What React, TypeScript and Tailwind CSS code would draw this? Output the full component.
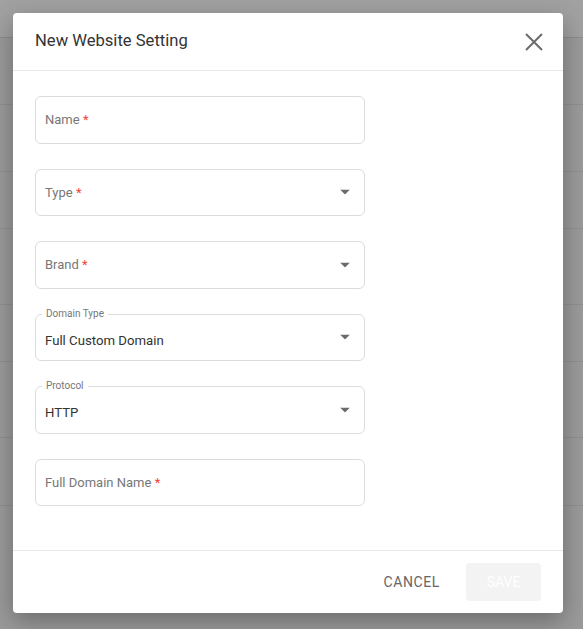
import React from "react";

const font = { fontFamily: "Roboto, 'Liberation Sans', Arial, sans-serif" };

function Arrow() {
  return (
    <svg width="10" height="5" viewBox="0 0 10 5" className="absolute right-[14px] top-1/2 -translate-y-1/2">
      <path d="M0 0 L10 0 L5 5 Z" fill="#6b6b6b" />
    </svg>
  );
}

function EmptyField({ label, select }: { label: string; select?: boolean }) {
  return (
    <div className="relative h-[47.5px] w-[330px] rounded-[6px] border border-[#dcdcdc] flex items-center px-[9px]">
      <span className="text-[13px] text-[#777]">
        {label} <span className="text-[#f44336]">*</span>
      </span>
      {select && <Arrow />}
    </div>
  );
}

function FilledSelect({ label, value }: { label: string; value: string }) {
  return (
    <div className="relative h-[47.5px] w-[330px] rounded-[6px] border border-[#dcdcdc] flex items-center px-[9px] pt-[7px]">
      <span className="absolute left-[6px] -top-[7px] bg-white px-[4px] text-[10px] leading-[12px] text-[#777]">{label}</span>
      <span className="text-[13.2px] text-[#333]">{value}</span>
      <Arrow />
    </div>
  );
}

export default function App() {
  const rows = [38, 67, 67, 57, 76, 57, 76, 68];
  return (
    <div className="relative w-[583px] h-[629px] overflow-hidden bg-[#9a9a9a]" style={font}>
      <div className="flex flex-col">
        {rows.map((h, i) => (
          <div
            key={i}
            className={i === 0 ? "bg-[#a1a1a1] border-b border-[#8c8c8c]" : "border-b border-[#8e8e8e]"}
            style={{ height: h }}
          />
        ))}
      </div>
      <div className="absolute inset-0 p-[13px] pb-[16px]">
        <div className="h-[600px] w-[550px] bg-white rounded-[4px] shadow-[0_8px_24px_rgba(0,0,0,0.3)] flex flex-col">
          <div className="h-[58px] flex items-center justify-between pl-[22px] pr-[20px] border-b border-[#e8e8e8]">
            <span className="text-[16.6px] text-[#333]">New Website Setting</span>
            <svg width="18" height="18" viewBox="0 0 18 18">
              <path d="M1 1 L17 17 M17 1 L1 17" stroke="#6b6b6b" strokeWidth="2" />
            </svg>
          </div>
          <div className="flex-1 flex flex-col gap-[25px] pl-[22px] pt-[25px]">
            <EmptyField label="Name" />
            <EmptyField label="Type" select />
            <EmptyField label="Brand" select />
            <FilledSelect label="Domain Type" value="Full Custom Domain" />
            <FilledSelect label="Protocol" value="HTTP" />
            <EmptyField label="Full Domain Name" />
          </div>
          <div className="h-[63px] border-t border-[#e8e8e8] flex items-center justify-end gap-[26px] pr-[22px]">
            <span className="text-[14px] text-[#666] tracking-[0.6px]">CANCEL</span>
            <div className="h-[38px] w-[75px] rounded-[4px] bg-[#f3f3f3] flex items-center justify-center text-[14px] text-white">SAVE</div>
          </div>
        </div>
      </div>
    </div>
  );
}
